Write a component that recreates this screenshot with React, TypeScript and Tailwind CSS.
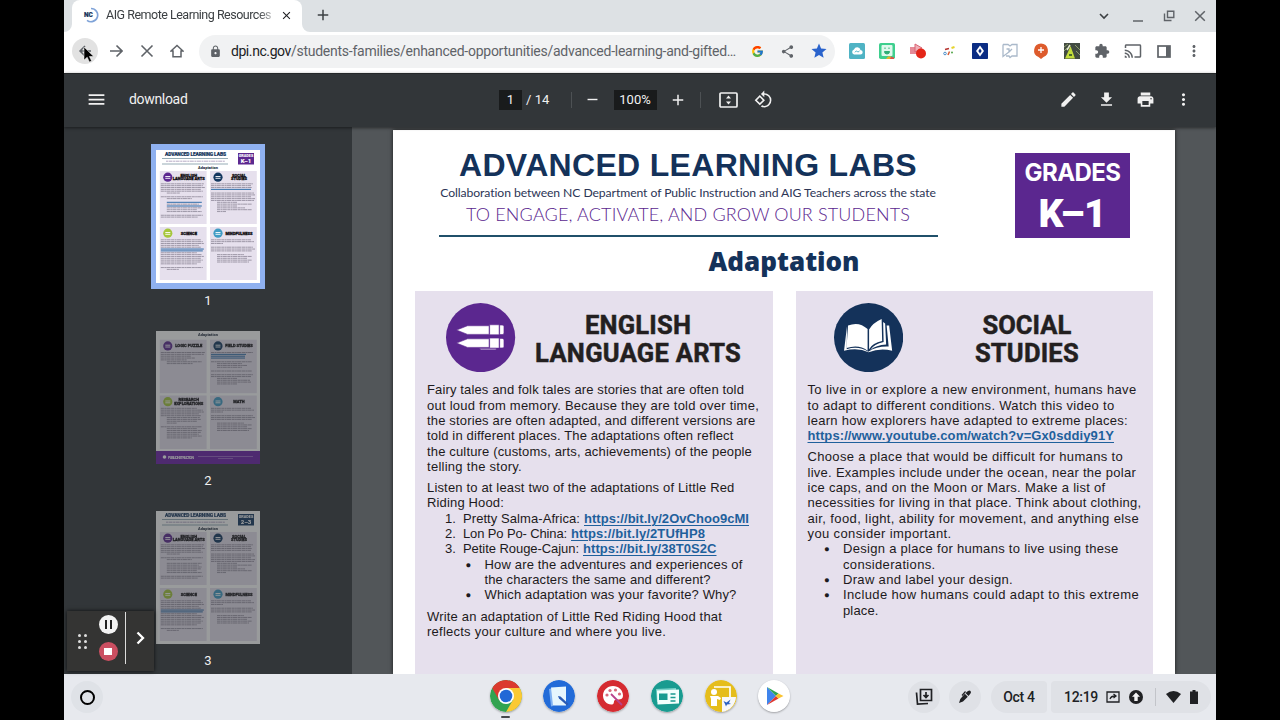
import { useLayoutEffect, useRef, useState } from "react";
import type { ReactNode } from "react";
import { FcGoogle } from "react-icons/fc";
import {
  MdAdd,
  MdCast,
  MdClose,
  MdDownload,
  MdEdit,
  MdExtension,
  MdLock,
  MdMenu,
  MdMoreVert,
  MdPrint,
  MdRemove,
  MdRotate90DegreesCcw,
  MdShare,
  MdStar
} from "react-icons/md";

// Tracks a line of text out (or in) until it is `w` pixels wide.
function Fit({ w, className = "", children }: { w: number; className?: string; children: string }) {
  const ref = useRef<HTMLSpanElement>(null);
  const [spacing, setSpacing] = useState(0);

  useLayoutEffect(() => {
    if (!ref.current) return;
    const natural = ref.current.getBoundingClientRect().width - spacing * children.length;
    setSpacing((w - natural) / children.length);
  }, [w, children]);

  return (
    <span ref={ref} className={`inline-block whitespace-nowrap ${className}`} style={{ letterSpacing: spacing }}>
      {children}
    </span>
  );
}

function Slot({ children }: { children: ReactNode }) {
  return <div className="flex h-full w-[30.7px] shrink-0 items-center justify-center">{children}</div>;
}

function TabStrip() {
  return (
    <div className="flex h-8 shrink-0 items-center bg-[#dde1e4] pl-2 text-[#3c4043]">
      <div className="relative flex h-8 w-[230px] items-center rounded-t-lg bg-white">
        <svg className="absolute -left-2 bottom-0" width="8" height="8"><path d="M8 0v8H0a8 8 0 0 0 8-8" fill="#fff" /></svg>
        <svg className="absolute -right-2 bottom-0" width="8" height="8"><path d="M0 0v8h8a8 8 0 0 1-8-8" fill="#fff" /></svg>
        <svg className="ml-[11px] -mt-0.5 shrink-0" width="16" height="16" viewBox="0 0 16 16">
          <path d="M8 1.5a6.6 6.6 0 1 1-4 11.8" fill="none" stroke="#7fa3d8" strokeWidth="1.7" />
          <text x="1" y="10.3" fontSize="6.5" fontWeight="900" fontFamily="Roboto, sans-serif" fill="#16335b" stroke="#16335b" strokeWidth=".2">NC</text>
        </svg>
        <div className="-mt-0.5 ml-[7px] w-[166px] overflow-hidden text-[12.5px] [mask-image:linear-gradient(to_right,black_92%,rgba(0,0,0,0.3))]">
          <Fit w={165}>AIG Remote Learning Resources</Fit>
        </div>
        <MdClose className="-mt-0.5 ml-2 text-[#202124]" size={13} />
      </div>
      <MdAdd className="-mt-0.5 ml-3" size={18} />
      <div className="ml-auto flex h-8 items-center pr-px">
        <Slot><svg width="12" height="12" viewBox="0 0 12 12"><path d="M2 4l4 4 4-4" fill="none" stroke="currentColor" strokeWidth="1.6" /></svg></Slot>
        <div className="w-1" />
        <Slot><svg width="12" height="12" viewBox="0 0 12 12"><path d="M1 11h10" stroke="#5f6368" strokeWidth="1.5" /></svg></Slot>
        <Slot>
          <svg width="12" height="12" viewBox="0 0 12 12" fill="none" stroke="#5f6368" strokeWidth="1.4">
            <path d="M4.5 1.2h6.3v6.3H4.500zM1.500 3.500v7h7" />
          </svg>
        </Slot>
        <Slot><svg width="12" height="12" viewBox="0 0 12 12"><path d="M1.200 1.200l9.600 9.600m0-9.600l-9.600 9.600" stroke="#5f6368" strokeWidth="1.500" /></svg></Slot>
      </div>
    </div>
  );
}

function Extensions() {
  return (
    <div className="flex h-full text-[#5f6368]">
      <Slot>
        <svg width="16" height="16" viewBox="0 0 16 16">
          <rect width="16" height="16" rx="1.500" fill="#4fb3c4" />
          <path d="M5 11.500h6.300a2.300 2.300 0 0 0 .2-4.600A3.400 3.400 0 0 0 5 6.500a2.600 2.600 0 0 0 0 5z" fill="#fff" />
          <path d="M6 9.300q1.500-2.300 2.300-.8t2.200-.8" fill="none" stroke="#4fb3c4" />
        </svg>
      </Slot>
      <Slot>
        <svg width="16" height="16" viewBox="0 0 16 16">
          <rect width="16" height="16" rx="1.800" fill="#3ecf8e" />
          <rect x="2.500" y="2" width="11" height="11" rx="1" fill="#dff8ec" />
          <path d="M6 4.500v1.500M10 4.500v1.500M5.500 8.500h5a2.500 2.500 0 0 1-5 0z" fill="#2fae76" stroke="#2fae76" />
          <path d="M7 16l2-2.500h3V16z" fill="#e5b52c" /><path d="M11 16l1-2.500 3 1V16z" fill="#d9534a" />
        </svg>
      </Slot>
      <Slot>
        <svg width="16" height="16" viewBox="0 0 16 16">
          <rect x="0" y="4" width="7" height="7" fill="#e58a97" />
          <path d="M5 1l7 4-7 4z" fill="#f0b0b8" stroke="#d96574" />
          <circle cx="11" cy="10.500" r="5" fill="#e42618" />
        </svg>
      </Slot>
      <Slot>
        <svg width="16" height="16" viewBox="0 0 16 16">
          <path d="M4 6.500l4-1" stroke="#b5332e" strokeWidth="1.600" /><path d="M10.500 5l3-1" stroke="#e6d32d" strokeWidth="2" />
          <circle cx="4" cy="10.500" r="1.300" fill="none" stroke="#4b8fc9" /><path d="M7 12l1.500-3.500" stroke="#d65a32" strokeWidth="1.500" /><circle cx="11" cy="9.500" r="1" fill="#54a64b" />
        </svg>
      </Slot>
      <Slot>
        <svg width="16" height="16" viewBox="0 0 16 16">
          <rect width="16" height="16" rx=".8" fill="#0b2d84" />
          <path d="M8 2.500L12 8l-4 5.500L4 8z" fill="#fff" /><path d="M8 5.500L9.700 8 8 10.500 6.300 8z" fill="#0b2d84" />
        </svg>
      </Slot>
      <Slot>
        <svg width="16" height="16" viewBox="0 0 16 16" fill="none" stroke="#aab9ca" strokeWidth="1.300">
          <path d="M1 1.500h5l2 1.500 2-1.500h5v11.500h-5L8 14.500 7 13H4M1 1.500v12l6-4.500V6H4.500M7 9l3-3" />
        </svg>
      </Slot>
      <Slot>
        <svg width="16" height="16" viewBox="0 0 16 16">
          <path d="M8 .5a7 7 0 0 1 2.500 13.500L8 16l-2.500-2A7 7 0 0 1 8 .5z" fill="#dd5b2c" />
          <path d="M8 4v6M5 7h6" stroke="#fff" strokeWidth="1.300" />
        </svg>
      </Slot>
      <Slot>
        <svg width="16" height="16" viewBox="0 0 16 16">
          <rect width="16" height="16" fill="#424b42" />
          <path d="M0 4l4-3M0 8l3-3M11 2l5 5M12 8l4 4" stroke="#8c9c6e" />
          <path d="M6.500 3L11 15.500H1L4 9z" fill="#c3dc3c" /><path d="M3 7l3-5" stroke="#e7edd0" strokeWidth="1.500" /><path d="M5 11h3v2H5z" fill="#4b6b2c" />
        </svg>
      </Slot>
      <Slot><MdExtension size={16} /></Slot>
      <Slot><MdCast size={18} /></Slot>
      <Slot>
        <svg width="14" height="13" viewBox="0 0 14 13">
          <rect x="1" y="1" width="12" height="11" fill="none" stroke="#5f6368" strokeWidth="1.700" /><path d="M9 1h4v11H9z" fill="#5f6368" />
        </svg>
      </Slot>
      <Slot><MdMoreVert size={18} /></Slot>
    </div>
  );
}

function AddressBar() {
  return (
    <div className="relative flex h-[41px] shrink-0 items-center bg-white pb-[2.500px] pl-[6px] text-[#5f6368]">
      <Slot>
        <div className="flex h-[26px] w-[26px] shrink-0 items-center justify-center rounded-full bg-[#e2e2e2]">
          <svg width="14" height="14" viewBox="0 0 14 14"><path d="M13 7H2m5-5L2 7l5 5" fill="none" stroke="currentColor" strokeWidth="1.500" /></svg>
        </div>
      </Slot>
      <Slot><svg width="14" height="14" viewBox="0 0 14 14"><path d="M1 7h11.500m-5-5.500L13 7l-5.500 5.500" fill="none" stroke="currentColor" strokeWidth="1.600" /></svg></Slot>
      <Slot><svg width="14" height="14" viewBox="0 0 14 14"><path d="M1.500 1.500l11 11m0-11l-11 11" stroke="currentColor" strokeWidth="1.600" /></svg></Slot>
      <Slot><svg width="14" height="14" viewBox="0 0 14 14"><path d="M1 7l6-5.500L13 7h-2v5.700H3V7z" fill="none" stroke="currentColor" strokeWidth="1.500" /></svg></Slot>
      <div className="ml-[6.200px] flex h-[33px] w-[636px] shrink-0 items-center rounded-full bg-[#f1f2f3] pl-[10px]">
        <MdLock size={13} />
        <div className="ml-[9px] w-[511px] text-[14px]">
          <Fit w={60} className="text-[#202124]">dpi.nc.gov</Fit>
          <Fit w={445}>/students-families/enhanced-opportunities/advanced-learning-and-gifted…</Fit>
        </div>
        <Slot><FcGoogle size={13} /></Slot>
        <Slot><MdShare size={15} /></Slot>
        <Slot><MdStar size={18} className="text-[#2a63cc]" /></Slot>
      </div>
      <div className="ml-[6.500px] h-full"><Extensions /></div>
      <svg className="absolute left-[19px] top-[14px]" width="12" height="18" viewBox="0 0 12 18">
        <path d="M1 1v13l3.200-2.800L6.400 16l2.200-1-2.200-4.500h4.300z" fill="#000" stroke="#fff" strokeWidth=".5" />
      </svg>
    </div>
  );
}

function PdfToolbar() {
  return (
    <div className="flex h-[54px] shrink-0 items-center border-t border-[#25282a] bg-[#323639] pb-[2px] pl-[22px] text-[#f1f1f1] shadow-[0_1px_3px_rgba(0,0,0,0.5)]">
      <MdMenu size={21} />
      <div className="ml-[22px] w-[370px] text-[14px]"><Fit w={58.500}>download</Fit></div>
      <div className="flex h-5 w-[23px] items-center justify-center bg-[#191b1c] text-[13px]">1</div>
      <div className="ml-1 w-[44.500px] text-[13px]"><Fit w={23.500}>/ 14</Fit></div>
      <div className="h-4 w-px bg-[#4d5154]" />
      <MdRemove className="ml-3" size={17} />
      <div className="ml-[13px] flex h-5 w-[43px] items-center justify-center bg-[#191b1c] text-[13px]">100%</div>
      <MdAdd className="ml-3" size={18} />
      <div className="ml-[13px] h-4 w-px bg-[#4d5154]" />
      <svg className="ml-[18px]" width="19" height="16" viewBox="0 0 19 16">
        <rect x="1" y="1" width="17" height="14" rx="1" fill="none" stroke="currentColor" strokeWidth="1.700" />
        <path d="M9.500 3.500l2.500 3h-5zM9.500 12.500l2.500-3h-5z" fill="currentColor" />
      </svg>
      <MdRotate90DegreesCcw className="ml-4" size={19} />
      <div className="ml-auto flex pr-[13px]">
        {[MdEdit, MdDownload, MdPrint, MdMoreVert].map((Icon, i) => (
          <div key={i} className="flex w-[38.500px] justify-center"><Icon size={19} /></div>
        ))}
      </div>
    </div>
  );
}

type Block = { x: number; y: number; h: number; color: string; title: string[]; rows: number[]; links?: number[] };

// Rows shorter than 36 read as indented list items; a 0 leaves a paragraph gap.
function MiniPanel({ x, y, h, color, title, rows, links = [] }: Block) {
  return (
    <g>
      <rect x={x} y={y} width="46.800" height={h} fill="#e6e0ed" />
      <circle cx={x + 8} cy={y + 6.200} r="4.600" fill={color} />
      <path d={`M${x + 5.500} ${y + 5.500}h5M${x + 5.500} ${y + 7.300}h5`} stroke="#fff" strokeWidth=".9" />
      {title.map((t, i) => (
        <text key={t} x={x + 29} y={y + (title.length > 1 ? 5.600 : 7.600) + i * 3.800} fontSize="4" fontWeight="900" textAnchor="middle" fill="#161418" stroke="#161418" strokeWidth=".3">{t}</text>
      ))}
      {rows.map((w, i) =>
        w === 0 ? null : (
          <path
            key={i}
            d={`M${x + (w < 36 && i > 4 ? 7 : 1)} ${y + 12.800 + i * 1.850}h${w}`}
            stroke={links.includes(i) ? "#2d6ca8" : "#8b8596"}
            strokeWidth={links.includes(i) ? 1 : 0.800}
            strokeDasharray={links.includes(i) ? undefined : "3.100 .4 1.700 .3 4.300 .5"}
          />
        )
      )}
    </g>
  );
}

function MiniPage({ grades, badge, middle }: { grades: string; badge: string; middle?: boolean }) {
  const top = middle ? 8.700 : 21;
  const second = middle ? 64.500 : 77;
  const h = middle ? 53.500 : 53;
  const names = middle
    ? [["LOGIC PUZZLE"], ["FIELD STUDIES"], ["RESEARCH", "EXPLORATIONS"], ["MATH"]]
    : [["ENGLISH", "LANGUAGE ARTS"], ["SOCIAL", "STUDIES"], ["SCIENCE"], ["MINDFULNESS"]];
  return (
    <svg width="104" height="133" viewBox="0 0 104 133" fontFamily="Roboto, sans-serif" className="block">
      <rect width="104" height="133" fill="#fff" />
      {!middle && (
        <g>
          <text x="9" y="6.200" fontSize="4.900" fontWeight="900" fill="#17375e" stroke="#17375e" strokeWidth=".2" textLength="61">ADVANCED LEARNING LABS</text>
          <path d="M6 8.500h66M6 14h66" stroke="#4f7484" strokeWidth=".6" />
          <path d="M10 11.200h59" stroke="#a394b5" strokeWidth=".8" strokeDasharray="2 .5 4 .6" />
          <rect x="82" y="3" width="16" height="11.500" fill={badge} />
          <text x="90" y="7.200" fontSize="3.800" fontWeight="900" textAnchor="middle" fill="#fff">GRADES</text>
          <text x="90" y="13.200" fontSize="6" fontWeight="900" textAnchor="middle" fill="#fff">{grades}</text>
        </g>
      )}
      <text x="52" y={middle ? 5.300 : 18.700} fontSize="3.900" fontWeight="900" textAnchor="middle" fill="#2a3444" textLength="20">Adaptation</text>
      <MiniPanel x={3.800} y={top} h={h} color="#5c2890" title={names[0]} rows={middle ? [44, 43, 30, 34, 26, 35, 26] : [43, 42, 44, 40, 42, 13, 0, 42, 25, 0, 35, 32, 35, 34, 30, 35, 0, 42, 37]} links={middle || grades === "2–3" ? [] : [10, 12]} />
      <MiniPanel x={54} y={top} h={h} color="#14375f" title={names[1]} rows={middle ? [42, 35, 34, 34, 0, 41, 25, 30, 25, 0, 41, 0, 42, 40, 20, 33, 34, 20] : [42, 40, 41, 40, 0, 43, 44, 40, 44, 43, 20, 35, 20, 28, 35, 9]} links={middle ? [1, 2, 3] : grades === "2–3" ? [] : [3]} />
      <MiniPanel x={3.800} y={second} h={h} color="#a5c63b" title={names[2]} rows={middle ? [36, 42, 43, 38, 40, 33, 34, 30, 10, 0, 41, 30, 35, 34, 32, 35, 25] : [40, 42, 43, 38, 40, 43, 42, 36, 41, 43, 40, 42, 40, 36, 0, 42, 12]} links={middle ? [] : [5, 6]} />
      <MiniPanel x={54} y={second} h={h} color="#3f9bc4" title={names[3]} rows={[40, 43, 12, 0, 42, 44, 41, 0, 27, 35, 30, 35, 32]} />
      {middle && (
        <g>
          <rect y="120" width="104" height="13" fill="#6a1fa8" />
          <circle cx="8.500" cy="126" r="1.800" fill="#fff" />
          <text x="12" y="128" fontSize="3.600" fontWeight="700" fill="#fff" textLength="26">PUBLIC INSTRUCTION</text>
          <path d="M42 125.500h55M62 127.500h15" stroke="#c9a7e2" strokeWidth=".5" />
        </g>
      )}
    </svg>
  );
}

function Sidebar() {
  return (
    <div className="flex w-[288px] shrink-0 flex-col items-center bg-[#323639] pt-[17px] text-[13px] text-[#f1f1f1]">
      <div className="h-[145px] border-x-[5.500px] border-y-[6px] border-[#8fb1f0]"><MiniPage grades="K–1" badge="#5c2890" /></div>
      <div className="mt-0.5 h-5 leading-5">1</div>
      <div className="mt-5 opacity-50"><MiniPage grades="" badge="" middle /></div>
      <div className="mt-[7px] h-5 leading-5">2</div>
      <div className="mt-5 opacity-50"><MiniPage grades="2–3" badge="#14375f" /></div>
      <div className="mt-[7px] h-5 leading-5">3</div>
    </div>
  );
}

function Line({ w, children }: { w: number; children: string }) {
  return <div className="h-[15.350px]"><Fit w={w}>{children}</Fit></div>;
}

function Item({ mark, pad, gap, children }: { mark: string; pad: string; gap: string; children: ReactNode }) {
  return (
    <div className={`flex ${pad}`}>
      <span className={`shrink-0 ${gap}`}>{mark}</span>
      <div>{children}</div>
    </div>
  );
}

const link = "font-bold text-[#1f609c] underline decoration-1 underline-offset-2";

function EnglishPanel() {
  return (
    <section className="w-[357.500px] shrink-0 bg-[#e6e0ed] pl-3">
      <div className="flex h-[91.300px] pl-[19.400px] pt-[11.700px] font-[Roboto,sans-serif] text-[25.500px] font-bold text-[#231f20] [-webkit-text-stroke:0.500px_#231f20]">
        <svg className="shrink-0" width="69.200" height="69.200" viewBox="0 0 69 69">
          <circle cx="34.500" cy="34.500" r="34.500" fill="#5b278f" />
          <g fill="#fff" stroke="#5b278f" strokeWidth=".6">
            <path d="M10.500 27l11-4.300H43v8.600H21.500zM43.500 21.700H53v10h-9.500zM53.500 22h2.500q1.800 0 1.800 1.500v6.500q0 1.500-1.800 1.500h-2.500z" />
            <path d="M10.500 40l11-4.300H43v8.600H21.500zM43.500 35H53v10h-9.500zM53.500 35.300h2.500q1.800 0 1.800 1.500v6.500q0 1.500-1.800 1.500h-2.500z" />
            <path d="M33 45.300h17v1.300H35z" />
          </g>
        </svg>
        <h3 className="mt-[8.800px] w-[245px] text-center leading-7">
          <Fit w={106}>ENGLISH</Fit><br /><Fit w={206}>LANGUAGE ARTS</Fit>
        </h3>
      </div>
      <Line w={317}>Fairy tales and folk tales are stories that are often told</Line>
      <Line w={332}>out loud from memory. Because they are told over time,</Line>
      <Line w={328.500}>the stories are often adapted, and different versions are</Line>
      <Line w={306.500}>told in different places. The adaptations often reflect</Line>
      <Line w={325}>the culture (customs, arts, achievements) of the people</Line>
      <Line w={95}>telling the story.</Line>
      <div className="h-[5.700px]" />
      <Line w={307.500}>Listen to at least two of the adaptations of Little Red</Line>
      <Line w={77}>Riding Hood:</Line>
      <Item mark="1." pad="h-[15.350px] pl-[18px]" gap="w-[18px]"><Fit w={117}>Pretty Salma-Africa:</Fit><Fit w={165} className={`ml-1 ${link}`}>https://bit.ly/2OvChoo9cMI</Fit></Item>
      <Item mark="2." pad="h-[15.350px] pl-[18px]" gap="w-[18px]"><Fit w={104}>Lon Po Po- China:</Fit><Fit w={134} className={`ml-1 ${link}`}>https://bit.ly/2TUfHP8</Fit></Item>
      <Item mark="3." pad="h-[15.350px] pl-[18px]" gap="w-[18px]"><Fit w={116}>Petite Rouge-Cajun:</Fit><Fit w={133.500} className={`ml-1 ${link}`}>https://bit.ly/38T0S2C</Fit></Item>
      <Item mark="●" pad="pl-[38.500px]" gap="w-[19px] text-[9.500px]"><Line w={258}>How are the adventures and experiences of</Line><Line w={226}>the characters the same and different?</Line></Item>
      <Item mark="●" pad="pl-[38.500px]" gap="w-[19px] text-[9.500px]"><Line w={252}>Which adaptation was your favorite? Why?</Line></Item>
      <div className="h-[6px]" />
      <Line w={295}>Write an adaptation of Little Red Riding Hood that</Line>
      <Line w={239}>reflects your culture and where you live.</Line>
    </section>
  );
}

function SocialPanel() {
  return (
    <section className="w-[357.500px] shrink-0 bg-[#e6e0ed] pl-3">
      <div className="flex h-[91.300px] pl-[26.200px] pt-[11.700px] font-[Roboto,sans-serif] text-[25.500px] font-bold text-[#231f20] [-webkit-text-stroke:0.500px_#231f20]">
        <svg className="shrink-0" width="69.200" height="69.200" viewBox="0 0 69 69">
          <circle cx="34.500" cy="34.500" r="34.500" fill="#14325a" />
          <g fill="#fff">
            <path d="M14 22.500q11-4.500 19.500 3.500v21.500q-9-6.500-21-2.500z" />
            <path d="M35 26.500q3.500-6.500 12.500-10.500L48 38q-9.500 2-13 8z" />
            <path d="M49 19l2 1.500 1 21q-10 .5-16 5.500 4-6 13.500-8z" />
            <path d="M52.500 22.500h2.500l3 25q-12-3-23.500 1.500Q24 44 10 47.500l3-24.500-.3 23q12-3.500 21.500 2.500Q43 43 54.500 43.500z" />
          </g>
        </svg>
        <h3 className="mt-[8.800px] w-[248px] text-center leading-7">
          <Fit w={89}>SOCIAL</Fit><br /><Fit w={104}>STUDIES</Fit>
        </h3>
      </div>
      <Line w={329}>To live in or explore a new environment, humans have</Line>
      <Line w={307}>to adapt to different conditions. Watch this video to</Line>
      <Line w={320.500}>learn how explorers have adapted to extreme places:</Line>
      <div className="h-[15.350px]"><Fit w={306.500} className={link}>https://www.youtube.com/watch?v=Gx0sddiy91Y</Fit></div>
      <div className="h-[5.700px]" />
      <Line w={315.500}>Choose a place that would be difficult for humans to</Line>
      <Line w={328.500}>live. Examples include under the ocean, near the polar</Line>
      <Line w={298}>ice caps, and on the Moon or Mars. Make a list of</Line>
      <Line w={334}>necessities for living in that place. Think about clothing,</Line>
      <Line w={331.500}>air, food, light, ability for movement, and anything else</Line>
      <Line w={144}>you consider important.</Line>
      <Item mark="●" pad="pl-[16.500px]" gap="w-[19px] text-[9.500px]"><Line w={275.500}>Design a place for humans to live using these</Line><Line w={92.500}>considerations.</Line></Item>
      <Item mark="●" pad="pl-[16.500px]" gap="w-[19px] text-[9.500px]"><Line w={170}>Draw and label your design.</Line></Item>
      <Item mark="●" pad="pl-[16.500px]" gap="w-[19px] text-[9.500px]"><Line w={296}>Include how humans could adapt to this extreme</Line><Line w={35.500}>place.</Line></Item>
    </section>
  );
}

function Document() {
  return (
    <div className="flex flex-1 justify-center overflow-hidden bg-[#525659] pt-[3px]">
      <article className="flex w-[782px] flex-col bg-white shadow-[0_0_4px_rgba(0,0,0,0.7)]">
        <header className="flex h-[107px] shrink-0 pl-[45.500px]">
          <div className="w-[499px] pt-[17.600px] text-center">
            <h1 className="h-[35px] text-[32px] font-bold leading-[34px] text-[#14325a]"><Fit w={458}>ADVANCED LEARNING LABS</Fit></h1>
            <p className="h-[20.600px] font-[Lato,sans-serif] text-[12.200px] leading-[20.600px] text-[#2c3555]"><Fit w={496}>Collaboration between NC Department of Public Instruction and AIG Teachers across the state</Fit></p>
            <p className="h-[23.600px] font-[Lato,sans-serif] text-[18px] font-light leading-[23.600px] text-[#5b278f]"><Fit w={444}>TO ENGAGE, ACTIVATE, AND GROW OUR STUDENTS</Fit></p>
            <div className="mt-[8.700px] h-[1.500px] bg-[#20506a]" />
          </div>
          <div className="ml-[77.500px] mt-[23px] h-[85px] w-[115px] bg-[#5b278f] text-center font-[Roboto,sans-serif] font-bold text-white">
            <div className="font-[Inter,sans-serif] text-[24px] font-bold leading-10"><Fit w={96}>GRADES</Fit></div>
            <div className="text-[39px] font-black leading-[42px]"><Fit w={68}>K–1</Fit></div>
          </div>
        </header>
        <h2 className="h-[54px] shrink-0 text-center font-['Open_Sans',sans-serif] text-[26px] font-extrabold leading-[49px] text-[#14325a]"><Fit w={151}>Adaptation</Fit></h2>
        <div className="flex flex-1 gap-[23px] pl-[22px] text-[13px] leading-[15.350px] text-[#1d1a20]">
          <EnglishPanel />
          <SocialPanel />
        </div>
      </article>
    </div>
  );
}

function Recorder() {
  return (
    <div className="absolute left-[3px] top-[611px] flex h-[60px] w-[87px] items-center bg-[#343433] shadow-[0_0_4px_rgba(0,0,0,0.8)]">
      <div className="ml-[11px] grid grid-cols-2 gap-x-[2.500px] gap-y-[3px]">
        {[0, 1, 2, 3, 4, 5].map((n) => <i key={n} className="h-[3px] w-[3px] rounded-full bg-[#dedede]" />)}
      </div>
      <div className="-mt-1.5 ml-[12px] flex flex-col gap-2">
        <div className="flex h-[19px] w-[19px] items-center justify-center gap-[3px] rounded-full bg-[#f3f3f3]">
          <i className="h-[9px] w-[2px] bg-[#222]" /><i className="h-[9px] w-[2px] bg-[#222]" />
        </div>
        <div className="flex h-[19px] w-[19px] items-center justify-center rounded-full bg-[#cb4f61]"><i className="h-[7px] w-[8px] bg-white" /></div>
      </div>
      <div className="-mt-1.5 ml-[7.500px] h-[52px] w-px bg-[#dcdcdc]" />
      <svg className="-mt-1.5 ml-[10px]" width="9" height="14" viewBox="0 0 9 14"><path d="M1.500 1.500L7 7l-5.500 5.500" fill="none" stroke="#fff" strokeWidth="2.300" /></svg>
    </div>
  );
}

function ShelfApps() {
  const disc = "block rounded-full shadow-[0_1px_2px_rgba(0,0,0,0.3)]";
  return (
    <div className="flex gap-[21.800px] pt-1.5">
      <div className="flex w-8 flex-col items-center">
        <svg className={disc} width="32" height="32" viewBox="0 0 32 32">
          <circle cx="16" cy="16" r="16" fill="#32a350" />
          <path d="M2.140 8A16 16 0 0 1 29.860 8H16L9.100 20z" fill="#db3a2e" />
          <path d="M29.860 8A16 16 0 0 1 16 32l6.900-12L16 8z" fill="#fbc934" />
          <circle cx="16" cy="16" r="8" fill="#fff" /><circle cx="16" cy="16" r="6.300" fill="#2268d6" />
        </svg>
        <i className="mt-1 h-[2px] w-[9px] rounded-full bg-[#45484c]" />
      </div>
      <svg className={disc} width="32" height="32" viewBox="0 0 32 32">
        <circle cx="16" cy="16" r="16" fill="#226bd8" />
        <path d="M6 9l4-1v18l-2 .5z" fill="#7fb1f2" /><path d="M8 7.500L23 6.500v19H10z" fill="#e6f6fd" />
        <path d="M15 16l2.500.5 8 7.500-1.500 1.500-8-7z" fill="#2a5bb4" />
      </svg>
      <svg className={disc} width="32" height="32" viewBox="0 0 32 32">
        <circle cx="16" cy="16" r="16" fill="#d52b31" />
        <path d="M16 6C10 6 6 10.500 6 15.500S10 25 15 24.500c3-.5 1-3.500 3-4.500 3-1.200 8 1 8-4.500C26 10 21.500 6 16 6z" fill="#fff" />
        <g fill="#d8697b"><circle cx="10" cy="15" r="1.600" /><circle cx="13" cy="10.500" r="1.600" /><circle cx="18.500" cy="10" r="1.600" /><circle cx="22.500" cy="14" r="1.600" /></g>
        <path d="M14 14l11 11" stroke="#b8428c" strokeWidth="1.800" />
      </svg>
      <svg className={disc} width="32" height="32" viewBox="0 0 32 32">
        <circle cx="16" cy="16" r="16" fill="#199b90" />
        <path d="M5 9l20-1v14H6z" fill="#7bd3ca" /><path d="M6 10.500L28 9.500v14L6.500 24.500z" fill="#f1fffc" />
        <path d="M8 13.500h8.500v6.500H8z" fill="#199b90" /><path d="M19.500 14h5M19.500 17.500h5M19.500 21h5" stroke="#199b90" strokeWidth="1.700" />
      </svg>
      <svg className={disc} width="32" height="32" viewBox="0 0 32 32">
        <circle cx="16" cy="16" r="16" fill="#e5bd1b" />
        <path d="M9 7h16v11" fill="none" stroke="#fff" strokeWidth="1.700" />
        <circle cx="9" cy="12" r="3" fill="#fff" /><path d="M5 16h8l3 2-1 2-3-1v7H6v-7z" fill="#fff" />
        <path d="M17 17h14a16 16 0 0 1-14 15z" fill="#f7f8fa" /><path d="M18.500 21l3 1.500 4-3-1.500 3.500 2 1-4 .5-1 2-1-2.500z" fill="#2c62c4" />
      </svg>
      <svg className={disc} width="32" height="32" viewBox="0 0 32 32">
        <circle cx="16" cy="16" r="16" fill="#fff" />
        <path d="M9 7v18l9-9z" fill="#3f84ec" /><path d="M9 7l11.500 6.500L18 16z" fill="#2fa453" />
        <path d="M9 25l11.500-6.500L18 16z" fill="#e0392f" /><path d="M20.500 13.500L25.500 16l-5 2.500L17.500 16z" fill="#fbc32e" />
      </svg>
    </div>
  );
}

function Shelf() {
  return (
    <div className="flex h-[46px] shrink-0 bg-[#e7e9ee] text-[#202124]">
      <div className="ml-[7px] mt-[7px] flex h-8 w-8 items-center justify-center rounded-full bg-[#dfe2e7]">
        <div className="h-[15px] w-[15px] rounded-full border-2 border-black" />
      </div>
      <div className="ml-[386.500px]"><ShelfApps /></div>
      <div className="ml-auto mr-[5px] mt-[7px] flex h-8 items-center text-[14px]">
        <div className="flex h-8 w-8 items-center justify-center rounded-full bg-[#dfe1e6]">
          <svg width="18" height="18" viewBox="0 0 18 18" fill="none" stroke="currentColor" strokeWidth="1.700">
            <path d="M5.500 1.500h11v11h-11zM1.500 4.500l1 11.500 10.500-.5M11 4v5.500M8.500 7l2.500 2.500L13.500 7" />
          </svg>
        </div>
        <div className="ml-[9.500px] flex h-8 w-8 items-center justify-center rounded-full bg-[#dfe1e6]">
          <svg width="14" height="14" viewBox="0 0 14 14" fill="currentColor">
            <path d="M10 1q1.500-1 2.500 0t0 2.500L10.500 6 7.500 3zM6.800 3.800l3 3L5 11.500 1 13l1.300-4z" /><path d="M4 5.500L7.500 1.500" stroke="currentColor" strokeWidth="1.200" />
          </svg>
        </div>
        <div className="ml-2.5 flex h-8 w-[56px] items-center justify-center rounded-l-2xl rounded-r bg-[#dfe1e6] font-medium"><Fit w={31.500}>Oct 4</Fit></div>
        <div className="ml-1 flex h-8 w-[160px] items-center rounded-l rounded-r-2xl bg-[#dfe1e6] pl-[13px] font-medium">
          <Fit w={34}>12:19</Fit>
          <svg className="ml-[7.500px]" width="14" height="12" viewBox="0 0 14 12" fill="none" stroke="currentColor" strokeWidth="1.300">
            <path d="M1 1h12v10H1zM4 8q1-3 5-3M7.500 3l2.500 2-2.500 2" />
          </svg>
          <svg className="ml-[9px]" width="14" height="14" viewBox="0 0 14 14">
            <circle cx="7" cy="7" r="7" fill="currentColor" /><path d="M7 2.500l4 4.300H8.700V11H5.300V6.800H3z" fill="#f4f4f6" />
          </svg>
          <div className="ml-3 h-[18px] w-px bg-[#c2c4c9]" />
          <svg className="ml-[10.500px]" width="15" height="12" viewBox="0 0 15 12"><path d="M0 3Q7.500-3 15 3L7.500 12z" fill="currentColor" /></svg>
          <svg className="ml-[9px]" width="8" height="14" viewBox="0 0 8 14"><path d="M2.500 0h3v1.500H8V14H0V1.500h2.500z" fill="currentColor" /></svg>
        </div>
      </div>
    </div>
  );
}

export default function App() {
  return (
    <main className="flex h-[720px] w-[1280px] justify-center overflow-hidden bg-black font-[Roboto,sans-serif]">
      <div className="relative flex w-[1152px] flex-col overflow-hidden">
        <TabStrip />
        <AddressBar />
        <div className="relative z-10"><PdfToolbar /></div>
        <div className="flex h-[547px] shrink-0 overflow-hidden">
          <Sidebar />
          <div className="flex flex-1 font-['Liberation_Sans',Arial,sans-serif]"><Document /></div>
        </div>
        <Shelf />
        <Recorder />
      </div>
    </main>
  );
}
